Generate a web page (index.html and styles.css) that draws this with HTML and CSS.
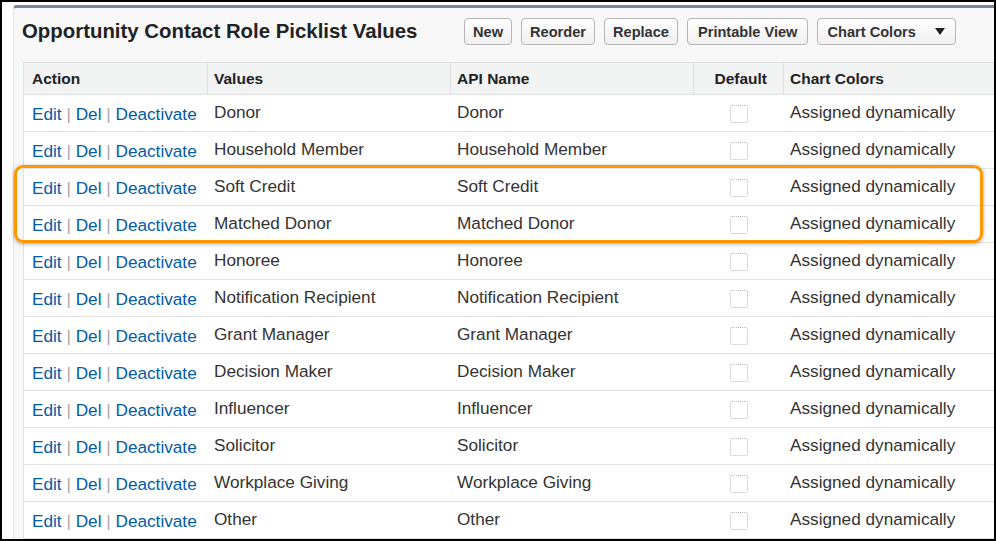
FILE: index.html
```html
<!DOCTYPE html>
<html>
<head>
<meta charset="utf-8">
<link rel="stylesheet" href="styles.css">
</head>
<body>
<div class="frame">
  <div class="panel">
    <div class="panel-head">
      <h2 class="title">Opportunity Contact Role Picklist Values</h2>
      <div class="buttons">
        <button class="btn">New</button>
        <button class="btn">Reorder</button>
        <button class="btn">Replace</button>
        <button class="btn btn-wide">Printable View</button>
        <button class="btn btn-menu">Chart Colors<svg class="caret" width="10" height="7" viewBox="0 0 10 7"><path d="M0 0H10L5 7Z" fill="#222"/></svg></button>
      </div>
    </div>
    <table class="list">
      <colgroup>
        <col class="c-action"><col class="c-val"><col class="c-api"><col class="c-def"><col class="c-color">
      </colgroup>
      <thead>
        <tr><th class="action">Action</th><th>Values</th><th>API Name</th><th class="def">Default</th><th class="last">Chart Colors</th></tr>
      </thead>
      <tbody>
        <tr><td class="action"><a>Edit</a> <span class="sep">|</span> <a>Del</a> <span class="sep">|</span> <a>Deactivate</a></td><td>Donor</td><td>Donor</td><td class="def"><span class="chk"></span></td><td>Assigned dynamically</td></tr>
        <tr><td class="action"><a>Edit</a> <span class="sep">|</span> <a>Del</a> <span class="sep">|</span> <a>Deactivate</a></td><td>Household Member</td><td>Household Member</td><td class="def"><span class="chk"></span></td><td>Assigned dynamically</td></tr>
        <tr><td class="action"><a>Edit</a> <span class="sep">|</span> <a>Del</a> <span class="sep">|</span> <a>Deactivate</a></td><td>Soft Credit</td><td>Soft Credit</td><td class="def"><span class="chk"></span></td><td>Assigned dynamically</td></tr>
        <tr><td class="action"><a>Edit</a> <span class="sep">|</span> <a>Del</a> <span class="sep">|</span> <a>Deactivate</a></td><td>Matched Donor</td><td>Matched Donor</td><td class="def"><span class="chk"></span></td><td>Assigned dynamically</td></tr>
        <tr><td class="action"><a>Edit</a> <span class="sep">|</span> <a>Del</a> <span class="sep">|</span> <a>Deactivate</a></td><td>Honoree</td><td>Honoree</td><td class="def"><span class="chk"></span></td><td>Assigned dynamically</td></tr>
        <tr><td class="action"><a>Edit</a> <span class="sep">|</span> <a>Del</a> <span class="sep">|</span> <a>Deactivate</a></td><td>Notification Recipient</td><td>Notification Recipient</td><td class="def"><span class="chk"></span></td><td>Assigned dynamically</td></tr>
        <tr><td class="action"><a>Edit</a> <span class="sep">|</span> <a>Del</a> <span class="sep">|</span> <a>Deactivate</a></td><td>Grant Manager</td><td>Grant Manager</td><td class="def"><span class="chk"></span></td><td>Assigned dynamically</td></tr>
        <tr><td class="action"><a>Edit</a> <span class="sep">|</span> <a>Del</a> <span class="sep">|</span> <a>Deactivate</a></td><td>Decision Maker</td><td>Decision Maker</td><td class="def"><span class="chk"></span></td><td>Assigned dynamically</td></tr>
        <tr><td class="action"><a>Edit</a> <span class="sep">|</span> <a>Del</a> <span class="sep">|</span> <a>Deactivate</a></td><td>Influencer</td><td>Influencer</td><td class="def"><span class="chk"></span></td><td>Assigned dynamically</td></tr>
        <tr><td class="action"><a>Edit</a> <span class="sep">|</span> <a>Del</a> <span class="sep">|</span> <a>Deactivate</a></td><td>Solicitor</td><td>Solicitor</td><td class="def"><span class="chk"></span></td><td>Assigned dynamically</td></tr>
        <tr><td class="action"><a>Edit</a> <span class="sep">|</span> <a>Del</a> <span class="sep">|</span> <a>Deactivate</a></td><td>Workplace Giving</td><td>Workplace Giving</td><td class="def"><span class="chk"></span></td><td>Assigned dynamically</td></tr>
        <tr><td class="action"><a>Edit</a> <span class="sep">|</span> <a>Del</a> <span class="sep">|</span> <a>Deactivate</a></td><td>Other</td><td>Other</td><td class="def"><span class="chk"></span></td><td>Assigned dynamically</td></tr>
      </tbody>
    </table>
  </div>
  <div class="highlight"></div>
</div>
</body>
</html>
```
FILE: styles.css
```css
* { box-sizing: border-box; }
html, body { margin: 0; padding: 0; background: #fff; }
body { font-family: "Liberation Sans", Arial, sans-serif; }

.frame {
  position: relative;
  width: 996px;
  height: 541px;
  border: 2px solid #000;
  overflow: hidden;
  background: #fff;
}

.panel {
  margin: 3px 0 0 11px;
  width: 1100px;
  height: 600px;
  background: #f8f8f8;
  border-top: 3px solid #7b8599;
  border-left: 1px solid #e3e3e3;
  border-top-left-radius: 4px;
  padding-left: 8px;
}

.panel-head {
  display: flex;
  align-items: flex-start;
  height: 38px;
}

.title {
  margin: 11px 0 0 0;
  width: 442px;
  font-size: 20.4px;
  line-height: 24px;
  font-weight: bold;
  color: #222;
}

.buttons {
  display: flex;
  gap: 9px;
  margin-top: 10px;
}

.btn {
  height: 27px;
  padding: 0 8px;
  font-family: "Liberation Sans", Arial, sans-serif;
  font-size: 14.6px;
  font-weight: bold;
  color: #333;
  background: linear-gradient(#ffffff, #f0f0f0);
  border: 1px solid #b5b5b5;
  border-radius: 4px;
  display: flex;
  align-items: center;
}

.btn-wide { padding: 0 10px; }
.btn-menu { padding: 0 10px 0 9px; }
.caret { margin-left: 19px; }

.list {
  margin: 16px 0 0 1px;
  border-collapse: separate;
  border-spacing: 0;
  table-layout: fixed;
  width: 990px;
  border-left: 1px solid #e0e0e0;
  background: #fff;
}

.c-action { width: 184px; }
.c-val { width: 243px; }
.c-api { width: 243px; }
.c-def { width: 90px; }
.c-color { width: 230px; }

.list th {
  height: 33px;
  background: #f2f3f3;
  border-top: 1px solid #e0e0e0;
  border-bottom: 1px solid #e0e0e0;
  border-right: 1px solid #e0e0e0;
  text-align: left;
  vertical-align: top;
  padding: 7px 0 0 6px;
  font-size: 15.5px;
  line-height: 18px;
  font-weight: bold;
  color: #222;
  white-space: nowrap;
}
.list th.last { border-right: none; }
.list th.action { padding-left: 8px; }
.list th.def { text-align: right; padding-right: 16px; }

.list td {
  height: 37px;
  border-bottom: 1px solid #e3e3e3;
  vertical-align: top;
  padding: 7px 0 0 6px;
  font-size: 17.2px;
  line-height: 20px;
  color: #333;
  white-space: nowrap;
}
.list td.action { padding: 9px 0 0 8px; }
.list td.def { padding: 10px 0 0 0; text-align: center; }

.list a { color: #015ba7; text-decoration: none; }
.sep { color: #a9a9a9; }

.chk {
  display: inline-block;
  width: 18px;
  height: 18px;
  border: 1px dotted #b8b8b8;
  border-radius: 2px;
  background: #fff;
  vertical-align: top;
}

.highlight {
  position: absolute;
  left: 12px;
  top: 163px;
  width: 969px;
  height: 78px;
  border: 3px solid #ff9800;
  border-radius: 9px;
  box-shadow: 0 1px 4px rgba(0, 0, 0, 0.35);
  pointer-events: none;
}
```
